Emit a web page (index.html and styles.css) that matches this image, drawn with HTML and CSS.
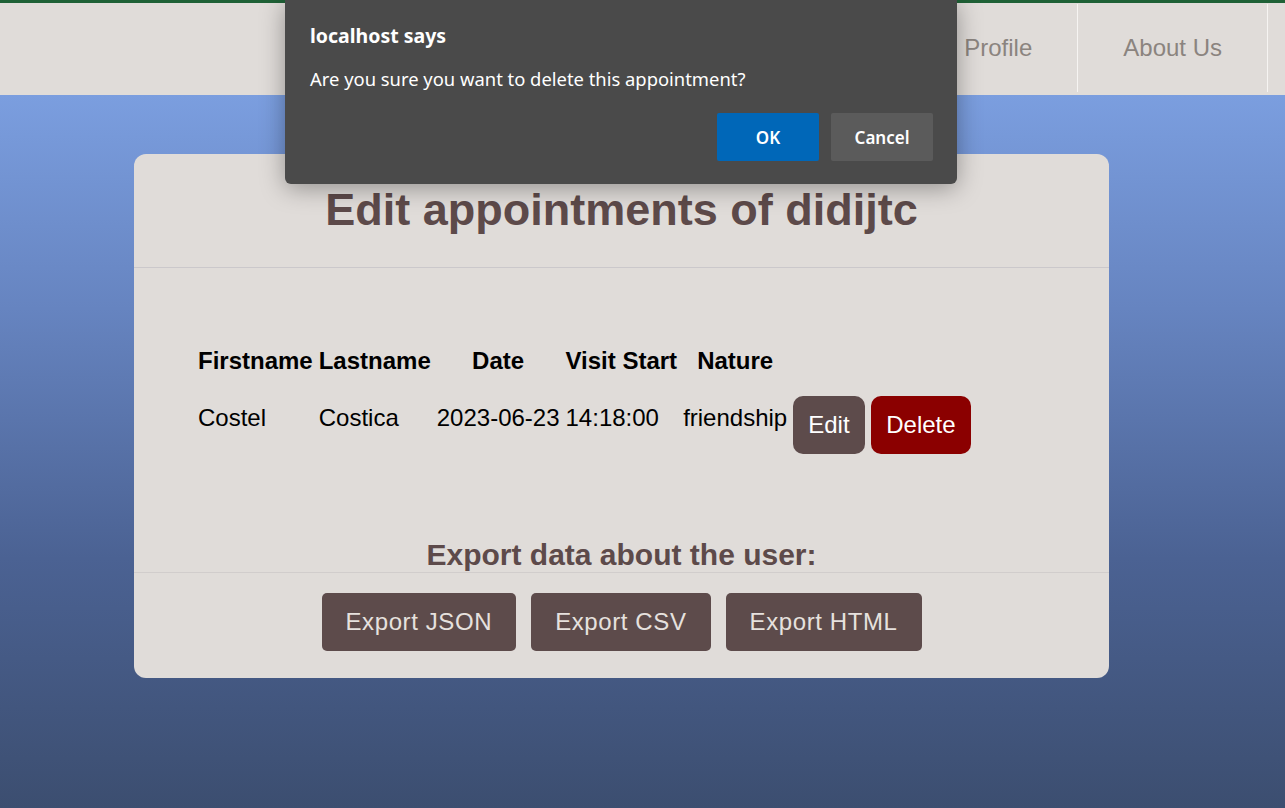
FILE: index.html
```html
<!DOCTYPE html>
<html lang="en">
<head>
<meta charset="utf-8">
<title>Edit appointments</title>
<link rel="stylesheet" href="styles.css">
</head>
<body>
  <nav class="topnav">
    <ul class="nav-list">
      <li class="nav-item"><a href="#">Home</a></li>
      <li class="nav-item"><a href="#">Appointments</a></li>
      <li class="nav-item"><a href="#">Profile</a></li>
      <li class="nav-item"><a href="#">About Us</a></li>
    </ul>
  </nav>

  <main class="page">
    <section class="card">
      <header class="card-header">
        <h1 class="card-title">Edit appointments of didijtc</h1>
      </header>
      <div class="card-body">
        <table class="appt-table">
          <thead>
            <tr>
              <th>Firstname</th>
              <th>Lastname</th>
              <th>Date</th>
              <th>Visit Start</th>
              <th>Nature</th>
              <th></th>
            </tr>
          </thead>
          <tbody>
            <tr>
              <td>Costel</td>
              <td>Costica</td>
              <td>2023-06-23</td>
              <td>14:18:00</td>
              <td>friendship</td>
              <td class="actions"><button class="btn btn-edit">Edit</button> <button class="btn btn-delete">Delete</button></td>
            </tr>
          </tbody>
        </table>
        <h2 class="export-title">Export data about the user:</h2>
      </div>
      <footer class="card-footer">
        <button class="export-btn">Export JSON</button>
        <button class="export-btn">Export CSV</button>
        <button class="export-btn">Export HTML</button>
      </footer>
    </section>
  </main>

  <div class="dialog" role="alertdialog">
    <div class="dialog-title">localhost says</div>
    <div class="dialog-msg">Are you sure you want to delete this appointment?</div>
    <div class="dialog-actions">
      <button class="dlg-btn dlg-ok">OK</button>
      <button class="dlg-btn dlg-cancel">Cancel</button>
    </div>
  </div>
</body>
</html>
```

FILE: styles.css
```css
html, body {
  margin: 0;
  padding: 0;
  height: 100%;
}

body {
  font-family: "Liberation Sans", Arial, sans-serif;
  background: #3d4f71;
  display: flex;
  flex-direction: column;
}

/* top navigation */
.topnav {
  background: #e0dcd9;
  border-top: 3px solid #1f6136;
  height: 92px;
  box-sizing: content-box;
  display: flex;
  justify-content: flex-end;
  padding: 0 17px 0 0;
}

.nav-list {
  list-style: none;
  margin: 1px 0 0 0;
  padding: 0;
  display: flex;
  height: 88px;
}

.nav-item {
  display: flex;
  align-items: center;
  border-right: 1px solid #f6f4f2;
}

.nav-item a {
  padding: 0 45px;
  font-size: 24px;
  color: #8b847f;
  text-decoration: none;
}

/* page */
.page {
  flex: 1;
  background: linear-gradient(to bottom, #7b9edf 0%, #6684c0 30%, #4b6293 65%, #3c4e70 100%);
  padding: 59px 0 40px 134px;
}

.card {
  width: 975px;
  background: #e0dcd9;
  border-radius: 12px;
  color: #5d4a4a;
}

.card-header {
  padding: 30px 0 31px;
  border-bottom: 1px solid #cbc8cb;
  text-align: center;
}

.card-title {
  margin: 0;
  font-size: 45px;
  font-weight: bold;
  color: #5d4a4a;
}

.card-body {
  padding: 75px 0 0 0;
}

.appt-table {
  margin-left: 60px;
  border-spacing: 2px;
  color: #000;
  font-size: 24px;
}

.appt-table th,
.appt-table td {
  padding: 2px;
}

.appt-table th {
  font-weight: bold;
  text-align: center;
}

.appt-table td {
  text-align: left;
}

.btn {
  font-family: "Liberation Sans", Arial, sans-serif;
  font-size: 24px;
  color: #fff;
  border: none;
  border-radius: 10px;
  padding: 15px;
  margin-top: 15px;
  vertical-align: top;
}

.btn-edit {
  background: #5d4b4b;
}

.btn-delete {
  background: #8b0000;
}

.export-title {
  margin: 80px 0 0;
  text-align: center;
  font-size: 30px;
  font-weight: bold;
  color: #5d4a4a;
}

.card-footer {
  border-top: 1px solid #d1cdcc;
  padding: 20px 0 27px;
  display: flex;
  justify-content: center;
  gap: 15px;
}

.export-btn {
  font-family: "Liberation Sans", Arial, sans-serif;
  font-size: 24px;
  letter-spacing: 0.6px;
  color: #e6e1de;
  background: #5d4b4b;
  border: none;
  border-radius: 5px;
  padding: 15px 24px;
}

/* alert dialog */
.dialog {
  position: absolute;
  top: 0;
  left: 285px;
  width: 672px;
  box-sizing: border-box;
  padding: 23px 24px 23px 25px;
  background: #4a4a4a;
  border-radius: 0 0 6px 6px;
  box-shadow: 0 4px 24px rgba(0, 0, 0, 0.35);
  font-family: "Noto Sans", "Open Sans", sans-serif;
  color: #fff;
}

.dialog-title {
  font-size: 19.5px;
  font-weight: bold;
  line-height: 26px;
}

.dialog-msg {
  margin-top: 17px;
  font-size: 18.4px;
  line-height: 25px;
}

.dialog-actions {
  margin-top: 22px;
  display: flex;
  justify-content: flex-end;
  gap: 12px;
}

.dlg-btn {
  width: 102px;
  height: 48px;
  border: none;
  border-radius: 2px;
  font-family: "Noto Sans", "Open Sans", sans-serif;
  font-size: 17px;
  font-weight: 600;
  color: #fff;
}

.dlg-ok {
  background: #0067b8;
}

.dlg-cancel {
  background: #5b5b5b;
}
```
